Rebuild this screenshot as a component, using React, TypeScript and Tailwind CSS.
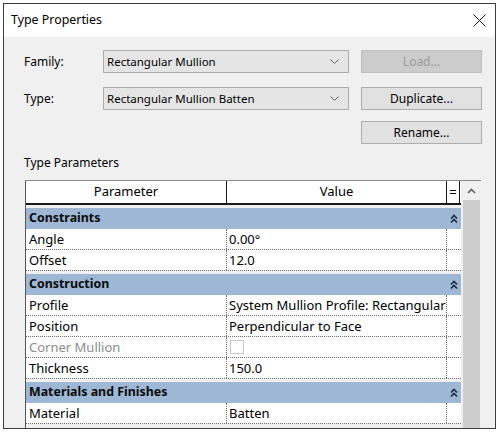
import React from "react";

function Chevron() {
  return (
    <svg width="9" height="5" viewBox="0 0 9 5" className="block">
      <path d="M0.5 0.5 L4.5 4.5 L8.5 0.5" fill="none" stroke="#606060" strokeWidth="1" />
    </svg>
  );
}

function DoubleCaret() {
  return (
    <svg width="8" height="10" viewBox="0 0 8 10" className="block">
      <path d="M1 4.5 L4 1.5 L7 4.5" fill="none" stroke="#1b2a44" strokeWidth="1.6" />
      <path d="M1 8.5 L4 5.5 L7 8.5" fill="none" stroke="#1b2a44" strokeWidth="1.6" />
    </svg>
  );
}

function Combo({ text }: { text: string }) {
  return (
    <div className="w-[246px] h-[23px] bg-[#e5e5e5] border border-[#acacac] flex items-center justify-between pl-[3px] pr-[9px]">
      <span className="text-[11.5px] text-black leading-none">{text}</span>
      <Chevron />
    </div>
  );
}

function Btn({ text, disabled }: { text: string; disabled?: boolean }) {
  return (
    <div
      className={
        disabled
          ? "w-[121px] h-[23px] bg-[#cccccc] border border-[#bfbfbf] flex items-center justify-center text-[12px] text-[#9a9a9a]"
          : "w-[121px] h-[23px] bg-[#e1e1e1] border border-[#adadad] flex items-center justify-center text-[12px] text-black"
      }
    >
      {text}
    </div>
  );
}

function Category({ name }: { name: string }) {
  return (
    <div className="mt-[3px] h-[21px] shrink-0 bg-[#9db7d5] flex items-center">
      <div className="flex-1 pl-[3px] text-[12.4px] font-bold text-[#0a0a0a] leading-none">{name}</div>
      <div className="w-[14px] flex justify-center">
        <DoubleCaret />
      </div>
    </div>
  );
}

function Row({ name, value, dim, check }: { name: string; value?: string; dim?: boolean; check?: boolean }) {
  return (
    <div className="h-[21px] shrink-0 bg-white flex border-b border-dotted border-[#6a6a6a]">
      <div className={"w-[200px] pl-[3px] flex items-center text-[13px] leading-none " + (dim ? "text-[#8c8c8c]" : "text-black")}>
        {name}
      </div>
      <div className="w-[220px] border-l border-dotted border-[#6a6a6a] pl-[2px] flex items-center text-[13px] leading-none text-black whitespace-nowrap overflow-hidden">
        {check ? <div className="w-[14px] h-[14px] border border-[#c8c8c8] bg-white ml-[1px]" /> : value}
      </div>
      <div className="w-[14px] border-l border-dotted border-[#6a6a6a]" />
    </div>
  );
}

export default function App() {
  return (
    <div className="w-[499px] h-[433px] bg-white pl-[3px] pt-[3px] font-['Noto_Sans',sans-serif]">
      <div className="w-[493px] h-[426px] border border-[#3c3c3c] flex flex-col bg-[#f0f0f0] overflow-hidden">
        <div className="h-[33px] shrink-0 bg-white flex items-center justify-between pl-[7px] pr-[9px]">
          <span className="text-[12.4px] text-black">Type Properties</span>
          <svg width="13" height="13" viewBox="0 0 13 13" className="block">
            <path d="M0.5 0.5 L12.5 12.5 M12.5 0.5 L0.5 12.5" stroke="#111" strokeWidth="1" />
          </svg>
        </div>
        <div className="flex-1 flex flex-col pl-[20px] pr-[13px] pt-[13px] min-h-0">
          <div className="flex items-center h-[23px]">
            <div className="w-[79px] text-[12px] text-black">Family:</div>
            <Combo text="Rectangular Mullion" />
            <div className="ml-[12px]">
              <Btn text="Load..." disabled />
            </div>
          </div>
          <div className="flex items-center h-[23px] mt-[14px]">
            <div className="w-[79px] text-[12px] text-black">Type:</div>
            <Combo text="Rectangular Mullion Batten" />
            <div className="ml-[12px]">
              <Btn text="Duplicate..." />
            </div>
          </div>
          <div className="flex justify-end h-[23px] mt-[11px]">
            <Btn text="Rename..." />
          </div>
          <div className="mt-[11px] h-[16px] text-[12px] leading-[16px] text-black">Type Parameters</div>
          <div className="mt-[9px] ml-[1px] w-[456px] flex-1 min-h-0 flex border-t border-[#8a8a8a] overflow-hidden">
            <div className="w-[436px] border-l border-[#555] flex flex-col">
              <div className="h-[24px] shrink-0 bg-white flex border-b-2 border-[#1a1a1a] text-[13px] text-black">
                <div className="w-[200px] flex items-center justify-center">Parameter</div>
                <div className="w-[220px] border-l border-[#1a1a1a] flex items-center justify-center">Value</div>
                <div className="w-[14px] border-l border-[#1a1a1a] border-r flex items-center justify-center leading-none">=</div>
              </div>
              <Category name="Constraints" />
              <Row name="Angle" value="0.00°" />
              <Row name="Offset" value="12.0" />
              <Category name="Construction" />
              <Row name="Profile" value="System Mullion Profile: Rectangular" />
              <Row name="Position" value="Perpendicular to Face" />
              <Row name="Corner Mullion" dim check />
              <Row name="Thickness" value="150.0" />
              <Category name="Materials and Finishes" />
              <Row name="Material" value="Batten" />
            </div>
            <div className="ml-[2px] w-[17px] flex flex-col">
              <div className="h-[19px] flex items-center justify-center bg-[#f0f0f0]">
                <svg width="9" height="6" viewBox="0 0 9 6" className="block">
                  <path d="M1 5 L4.5 1.5 L8 5" fill="none" stroke="#606060" strokeWidth="1.6" />
                </svg>
              </div>
              <div className="flex-1 bg-[#cdcdcd]" />
            </div>
          </div>
        </div>
      </div>
    </div>
  );
}
